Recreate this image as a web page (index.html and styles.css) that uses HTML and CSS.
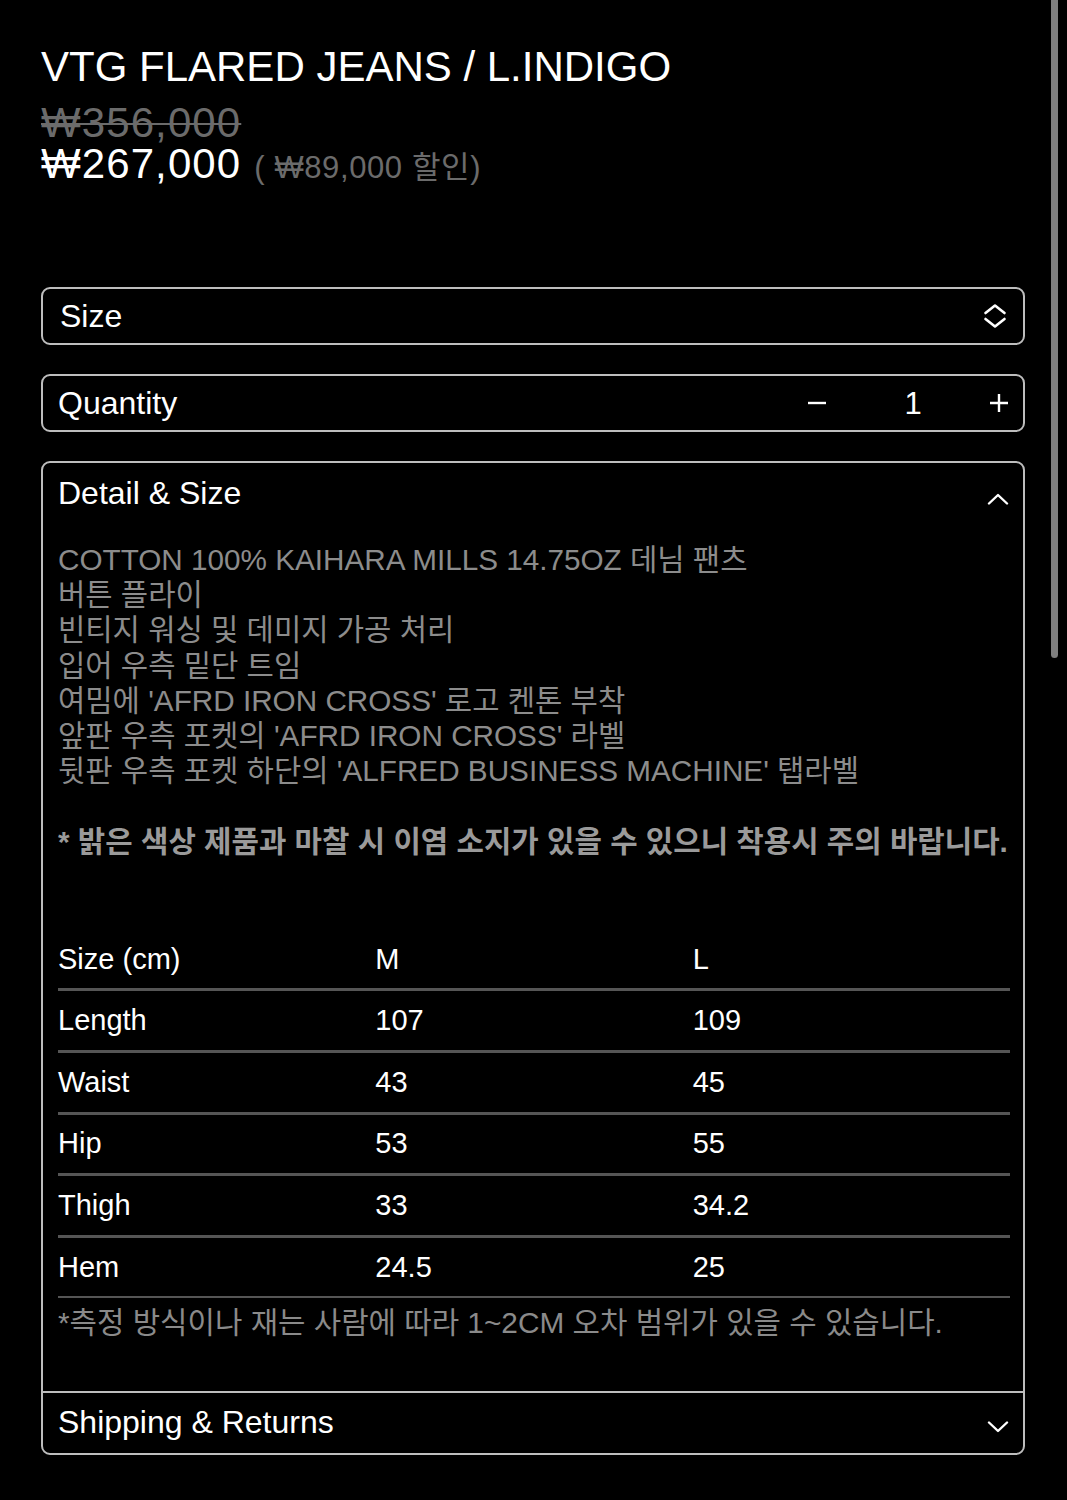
FILE: index.html
```html
<!DOCTYPE html>
<html lang="ko">
<head>
<meta charset="utf-8">
<title>VTG FLARED JEANS / L.INDIGO</title>
<link rel="stylesheet" href="styles.css">
</head>
<body>
<div class="page">
  <h1 class="title">VTG FLARED JEANS / L.INDIGO</h1>
  <div class="price-old">₩356,000</div>
  <div class="price-row"><span class="price-new">₩267,000</span><span class="price-off">( ₩89,000 할인)</span></div>

  <div class="field field-select">
    <span class="field-label">Size</span>
    <svg class="sel-icon" width="24" height="26" viewBox="0 0 24 26"><path d="M2.5 10 L12 2.5 L21.5 10 M2.5 16 L12 23.5 L21.5 16" fill="none" stroke="#fff" stroke-width="2.6" stroke-linecap="round" stroke-linejoin="round"/></svg>
  </div>

  <div class="field field-qty">
    <span class="field-label">Quantity</span>
    <div class="qty-ctrl">
      <span class="qty-btn"><svg width="20" height="20" viewBox="0 0 20 20"><path d="M1 10 H19" stroke="#fff" stroke-width="2.4"/></svg></span>
      <span class="qty-num">1</span>
      <span class="qty-btn"><svg width="20" height="20" viewBox="0 0 20 20"><path d="M1 10 H19 M10 1 V19" stroke="#fff" stroke-width="2.4"/></svg></span>
    </div>
  </div>

  <div class="accordion">
    <div class="acc-head">
      <span class="acc-title">Detail &amp; Size</span>
      <svg class="chev chev-up" width="22" height="12" viewBox="0 0 22 12"><path d="M2 10.5 L11 2 L20 10.5" fill="none" stroke="#fff" stroke-width="2.4" stroke-linecap="round" stroke-linejoin="round"/></svg>
    </div>
    <div class="acc-body">
      <p class="desc">COTTON 100% KAIHARA MILLS 14.75OZ 데님 팬츠<br>버튼 플라이<br>빈티지 워싱 및 데미지 가공 처리<br>입어 우측 밑단 트임<br>여밈에 'AFRD IRON CROSS' 로고 켄톤 부착<br>앞판 우측 포켓의 'AFRD IRON CROSS' 라벨<br>뒷판 우측 포켓 하단의 'ALFRED BUSINESS MACHINE' 탭라벨<br><br><strong class="note">* 밝은 색상 제품과 마찰 시 이염 소지가 있을 수 있으니 착용시 주의 바랍니다.</strong></p>
      <table class="size-table">
        <tr><td>Size (cm)</td><td>M</td><td>L</td></tr>
        <tr><td>Length</td><td>107</td><td>109</td></tr>
        <tr><td>Waist</td><td>43</td><td>45</td></tr>
        <tr><td>Hip</td><td>53</td><td>55</td></tr>
        <tr><td>Thigh</td><td>33</td><td>34.2</td></tr>
        <tr class="last"><td>Hem</td><td>24.5</td><td>25</td></tr>
      </table>
      <p class="foot">*측정 방식이나 재는 사람에 따라 1~2CM 오차 범위가 있을 수 있습니다.</p>
    </div>
    <div class="acc-head acc-ship">
      <span class="acc-title">Shipping &amp; Returns</span>
      <svg class="chev chev-down" width="22" height="12" viewBox="0 0 22 12"><path d="M2 1.5 L11 10 L20 1.5" fill="none" stroke="#fff" stroke-width="2.4" stroke-linecap="round" stroke-linejoin="round"/></svg>
    </div>
  </div>
</div>
<div class="scrollbar"></div>
</body>
</html>
```

FILE: styles.css
```css
html, body {
  margin: 0;
  padding: 0;
  background: #000;
}
body {
  font-family: "Liberation Sans", "Noto Sans CJK KR", sans-serif;
  color: #fff;
  min-height: 1500px;
}
.page {
  padding: 42px 42px 0 41px;
}
.title {
  margin: 0 0 10px 0;
  font-size: 42px;
  font-weight: 400;
  line-height: 50px;
  color: #fff;
  white-space: nowrap;
}
.price-old {
  font-size: 42px;
  line-height: 41px;
  letter-spacing: 1.1px;
  color: #6b6b6b;
  text-decoration: line-through;
  text-decoration-thickness: 2px;
}
.price-row {
  display: flex;
  align-items: baseline;
  height: 41px;
  line-height: 41px;
}
.price-new {
  font-size: 42px;
  letter-spacing: 1.1px;
  color: #fff;
}
.price-off {
  font-size: 31px;
  letter-spacing: 0.6px;
  color: #6b6b6b;
  margin-left: 13px;
}
.field {
  box-sizing: border-box;
  height: 58px;
  border: 2px solid #bdbdbd;
  border-radius: 9px;
  display: flex;
  align-items: center;
  justify-content: space-between;
  font-size: 32px;
}
.field-select {
  margin-top: 103px;
  padding: 0 16px 0 17px;
}
.field-qty {
  margin-top: 29px;
  padding: 0 4px 0 15px;
}
.sel-icon {
  display: block;
}
.qty-ctrl {
  display: flex;
  align-items: center;
}
.qty-btn, .qty-num {
  width: 40px;
  display: flex;
  justify-content: center;
  align-items: center;
}
.qty-btn svg {
  display: block;
}
.qty-num {
  margin: 0 46px 0 56px;
  font-size: 31px;
  line-height: 1;
}
.accordion {
  margin-top: 29px;
  border: 2px solid #bdbdbd;
  border-radius: 9px;
}
.acc-head {
  height: 60px;
  display: flex;
  align-items: center;
  justify-content: space-between;
  padding: 0 14px 0 15px;
}
.acc-title {
  font-size: 32px;
}
.chev {
  display: block;
}
.chev-up {
  margin-top: 12px;
}
.chev-down {
  margin-top: 9px;
}
.acc-ship {
  border-top: 2px solid #bdbdbd;
}
.acc-body {
  padding: 19px 13px 50px 15px;
}
.desc {
  margin: 0;
  font-size: 29.7px;
  line-height: 35.2px;
  color: #8c8c8c;
}
.note {
  font-size: 29.8px;
  font-weight: 700;
  color: #9a9a9a;
  white-space: nowrap;
}
.size-table {
  width: 100%;
  margin-top: 71px;
  border-collapse: collapse;
  table-layout: fixed;
}
.size-table td {
  height: 58.6px;
  padding: 0;
  font-size: 29px;
  color: #fff;
  vertical-align: middle;
  border-bottom: 3px solid #555;
}
.size-table tr.last td {
  border-bottom: 2px solid #555;
}
.foot {
  margin: 7px 0 0 0;
  font-size: 29.8px;
  line-height: 35.2px;
  color: #8a8a8a;
}
.scrollbar {
  position: absolute;
  top: 0;
  left: 1051px;
  width: 7px;
  height: 658px;
  background: #7f7f7f;
  border-radius: 0 0 4px 4px;
}
```
